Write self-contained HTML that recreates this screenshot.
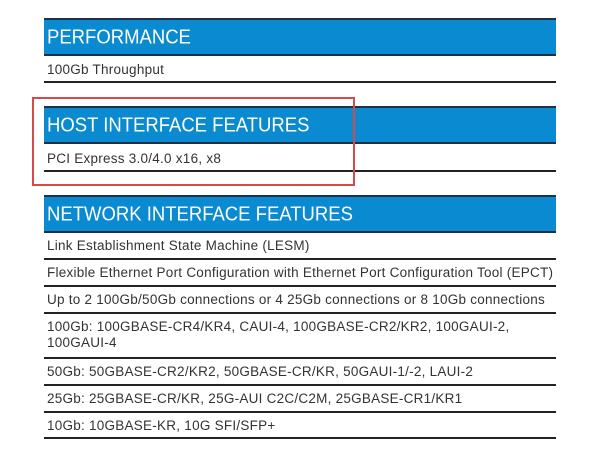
<!DOCTYPE html>
<html><head><style>
body{margin:0;background:#fff;width:600px;height:452px;position:relative;overflow:hidden;font-family:"Liberation Sans",sans-serif}
.h{position:absolute;left:44px;width:512px;background:#0a8ad0;border-top:2px solid #1d3044;color:#fff;font-size:18.5px;box-sizing:border-box;padding-left:3px;padding-top:0;line-height:34px;border-bottom:2px solid #1d3044;white-space:nowrap}
.h span{display:inline-block;transform:scaleY(1.12);transform-origin:50% 60%}
.r{position:absolute;left:44px;width:512px;border-bottom:2px solid #222;color:#333;font-size:13.5px;letter-spacing:0.25px;padding-left:3px;box-sizing:border-box;line-height:16px;white-space:nowrap}
.box{position:absolute;left:32px;top:97px;width:319px;height:85px;border:2px solid #d84a4a}
</style></head><body>
<div class="h" style="top:18px;height:38px"><span>PERFORMANCE</span></div>
<div class="r" style="top:56px;height:27px;padding-top:6px">100Gb Throughput</div>
<div class="h" style="top:106px;height:38px"><span>HOST INTERFACE FEATURES</span></div>
<div class="r" style="top:144px;height:28px;padding-top:7px">PCI Express 3.0/4.0 x16, x8</div>
<div class="box"></div>
<div class="h" style="top:195px;height:38px"><span>NETWORK INTERFACE FEATURES</span></div>
<div class="r" style="top:233px;height:27px;padding-top:5px">Link Establishment State Machine (LESM)</div>
<div class="r" style="top:260px;height:27px;padding-top:5px">Flexible Ethernet Port Configuration with Ethernet Port Configuration Tool (EPCT)</div>
<div class="r" style="top:287px;height:27px;padding-top:5px">Up to 2 100Gb/50Gb connections or 4 25Gb connections or 8 10Gb connections</div>
<div class="r" style="top:314px;height:45px;padding-top:5px">100Gb: 100GBASE-CR4/KR4, CAUI-4, 100GBASE-CR2/KR2, 100GAUI-2,<br>100GAUI-4</div>
<div class="r" style="top:359px;height:27px;padding-top:5px">50Gb: 50GBASE-CR2/KR2, 50GBASE-CR/KR, 50GAUI-1/-2, LAUI-2</div>
<div class="r" style="top:386px;height:27px;padding-top:5px">25Gb: 25GBASE-CR/KR, 25G-AUI C2C/C2M, 25GBASE-CR1/KR1</div>
<div class="r" style="top:413px;height:26px;padding-top:5px">10Gb: 10GBASE-KR, 10G SFI/SFP+</div>
</body></html>
